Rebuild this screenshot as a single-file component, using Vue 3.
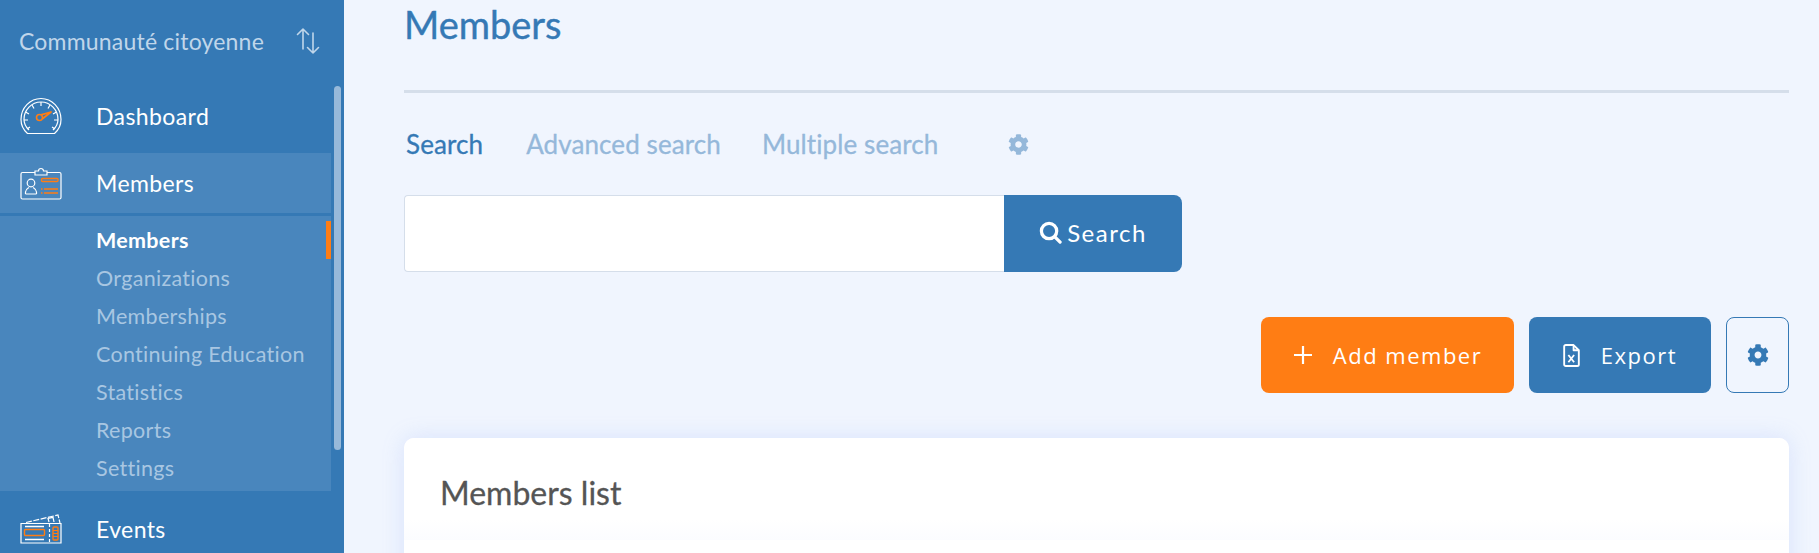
<script setup>
const subItems = [
  { label: 'Members', active: true },
  { label: 'Organizations' },
  { label: 'Memberships' },
  { label: 'Continuing Education' },
  { label: 'Statistics' },
  { label: 'Reports' },
  { label: 'Settings' }
]
const tabs = ['Search', 'Advanced search', 'Multiple search']
const gear = 'M487.4 315.7l-42.6-24.6c4.3-23.2 4.3-47 0-70.2l42.6-24.6c4.9-2.8 7.1-8.6 5.5-14-11.1-35.6-30-67.8-54.7-94.6-3.8-4.1-10-5.1-14.8-2.3L380.8 110c-17.9-15.4-38.5-27.3-60.8-35.1V25.8c0-5.6-3.9-10.5-9.4-11.7-36.7-8.2-74.3-7.8-109.2 0-5.5 1.2-9.4 6.1-9.4 11.7V75c-22.2 7.9-42.8 19.8-60.8 35.1L88.7 85.5c-4.9-2.8-11-1.9-14.8 2.3-24.7 26.7-43.6 58.9-54.7 94.6-1.7 5.4.6 11.2 5.5 14L67.3 221c-4.3 23.2-4.3 47 0 70.2l-42.6 24.6c-4.9 2.8-7.1 8.6-5.5 14 11.1 35.6 30 67.8 54.7 94.6 3.8 4.1 10 5.1 14.8 2.3l42.6-24.6c17.9 15.4 38.5 27.3 60.8 35.1v49.2c0 5.6 3.9 10.5 9.4 11.7 36.7 8.2 74.3 7.8 109.2 0 5.5-1.2 9.4-6.1 9.4-11.7v-49.2c22.2-7.9 42.8-19.8 60.8-35.1l42.6 24.6c4.9 2.8 11 1.9 14.8-2.3 24.7-26.7 43.6-58.9 54.7-94.6 1.5-5.5-.7-11.3-5.6-14.1zM256 336c-44.1 0-80-35.9-80-80s35.9-80 80-80 80 35.9 80 80-35.9 80-80 80z'
</script>

<template>
  <div class="app">
    <aside class="sidebar">
      <div class="community">
        <span>Communauté citoyenne</span>
        <svg class="switch" viewBox="0 0 24 28" width="24" height="28" fill="none" stroke="currentColor" stroke-width="1.6" stroke-linecap="round" stroke-linejoin="round">
          <path d="M7 22V2M1.500 7.500L7 2l5.500 5.500" />
          <path d="M17 6v20M11.500 20.500L17 26l5.500-5.500" />
        </svg>
      </div>

      <div class="navRow first">
        <svg class="navIcon" viewBox="0 0 42 38" width="42" height="38" fill="none" stroke="#fff" stroke-width="1.200">
          <path d="M7.500 36.500C3.500 33 1 28 1 22.500 1 11 10 1.500 21 1.500S41 11 41 22.500C41 28 38.500 33 34.500 36.500Z" />
          <path d="M9 33C5.800 30 4 26.500 4 22.500 4 13 11.600 5 21 5s17 8 17 17.500c0 4-1.800 7.500-5 10.500" />
          <path d="M21 5v4M12 8l2 3.500M30 8l-2 3.500M5.500 15l3.500 2M36.500 15l-3.500 2M4 23h4M38 23h-4M7 32l3-2M35 32l-3-2" />
          <circle cx="19.500" cy="20.500" r="3" stroke="#ff7d14" stroke-width="1.600" />
          <path d="M21 17.800L31 15 22.500 21.800" stroke="#ff7d14" stroke-width="1.800" stroke-linejoin="round" />
        </svg>
        <span>Dashboard</span>
      </div>

      <div class="navRow current">
        <svg class="navIcon" viewBox="0 0 42 34" width="42" height="34" fill="none" stroke="#fff" stroke-width="1.200">
          <path d="M15 6.500H2.500a1.500 1.500 0 0 0-1.500 1.500v23.500a1.500 1.500 0 0 0 1.500 1.500h37a1.500 1.500 0 0 0 1.500-1.500V8a1.500 1.500 0 0 0-1.500-1.500H27" />
          <path d="M15 9V5h3.500a2.500 2.500 0 0 1 5 0H27v4Z" />
          <circle cx="11" cy="17" r="3.800" />
          <path d="M5.500 28v-2c0-2.500 2-3.500 3.500-4.500M16.500 28v-2c0-2.500-2-3.500-3.500-4.500M5.500 28h11" />
          <rect x="21.500" y="12.500" width="16.500" height="3" rx="1" stroke="#ff7d14" stroke-width="1.300" />
          <path d="M24 23h14M24 27h14M21 23h1.500M21 27h1.500" stroke="#ff7d14" stroke-width="1.500" />
        </svg>
        <span>Members</span>
      </div>

      <ul class="subList">
        <li v-for="item in subItems" :key="item.label" class="subItem" :class="{ active: item.active }">{{ item.label }}</li>
      </ul>

      <div class="navRow last">
        <svg class="navIcon" viewBox="0 0 42 30" width="42" height="30" fill="none" stroke="#fff" stroke-width="1.200">
          <path d="M1 9.500h40v19.500H1Z" />
          <path d="M6 8.500L38 1l2 8" stroke-dasharray="6 1.500" />
          <path d="M29 8l-1-3.500 5-1.200 1 4.700" />
          <path d="M5 12.500h19M5 25.500h19" stroke-width="1.400" />
          <path d="M29.500 10v19" stroke-dasharray="3 2" />
          <rect x="4.500" y="15.500" width="20" height="6" rx="1" stroke="#ff7d14" stroke-width="1.400" />
          <rect x="33" y="13" width="5" height="13" rx="1" stroke="#ff7d14" stroke-width="1.400" />
          <path d="M33 16.500h5M33 19.500h5M33 22.500h5" stroke="#ff7d14" />
        </svg>
        <span>Events</span>
      </div>

      <div class="scrollThumb"></div>
    </aside>

    <main class="content">
      <h1>Members</h1>
      <hr class="divider" />

      <nav class="tabs">
        <a v-for="(tab, i) in tabs" :key="tab" class="tab" :class="{ selected: i === 0 }">{{ tab }}</a>
        <svg class="tabGear" viewBox="0 0 512 512" width="21" height="21"><path :d="gear" fill="currentColor" /></svg>
      </nav>

      <div class="searchBar">
        <input class="searchInput" type="text" />
        <button class="searchBtn">
          <svg viewBox="0 0 24 24" width="23" height="23" fill="none" stroke="currentColor" stroke-width="3.400" stroke-linecap="round">
            <circle cx="10.500" cy="10.500" r="8" />
            <path d="M16.500 16.500L22 22" />
          </svg>
          <span>Search</span>
        </button>
      </div>

      <div class="actions">
        <button class="actionBtn add">
          <svg viewBox="0 0 20 20" width="20" height="20" stroke="currentColor" stroke-width="2.200"><path d="M10 1v18M1 10h18" /></svg>
          <span>Add member</span>
        </button>
        <button class="actionBtn export">
          <svg viewBox="0 0 16 22" width="17" height="23" fill="none" stroke="currentColor" stroke-width="1.800" stroke-linejoin="round">
            <path d="M1 2.500a1.500 1.500 0 0 1 1.500-1.500h7.500l5 5v13.500a1.500 1.500 0 0 1-1.500 1.500h-11a1.500 1.500 0 0 1-1.500-1.500Z" />
            <path d="M10 1v5h5" />
            <path d="M5 10.500l5.500 7M10.500 10.500l-5.500 7" stroke-width="1.700" />
          </svg>
          <span>Export</span>
        </button>
        <button class="cogBtn">
          <svg viewBox="0 0 512 512" width="22" height="22"><path :d="gear" fill="currentColor" /></svg>
        </button>
      </div>

      <section class="card">
        <header class="cardHead">Members list</header>
      </section>
    </main>
  </div>
</template>

<style scoped>
.app {
  display: flex;
  height: 553px;
  overflow: hidden;
  background: #f0f5fe;
  font-family: Lato, "Noto Sans", sans-serif;
}

.sidebar {
  position: relative;
  flex: 0 0 344px;
  background: #3579b5;
  color: #fff;
  overflow: hidden;
}

.community {
  height: 86px;
  padding: 0 24px 5px 19px;
  box-sizing: border-box;
  display: flex;
  align-items: center;
  justify-content: space-between;
  color: #c0d6ea;
  font-size: 23px;
  letter-spacing: 0.2px;
}

.navRow {
  height: 60px;
  display: flex;
  align-items: center;
  font-size: 23px;
  letter-spacing: 0.4px;
  width: 331px;
}

.navIcon {
  margin-left: 20px;
  flex: none;
}

.navRow span {
  position: absolute;
  left: 96px;
}

.first {
  margin-bottom: 7px;
}

.current {
  background: #4986bd;
  margin-bottom: 3px;
}

.last {
  margin-top: 8px;
}

.subList {
  list-style: none;
  margin: 0;
  padding: 5px 0 4px;
  width: 331px;
  background: #4986bd;
}

.subItem {
  height: 38px;
  line-height: 38px;
  padding-left: 96px;
  font-size: 21.5px;
  letter-spacing: 0.3px;
  color: #a8c6e2;
}

.subItem.active {
  color: #fff;
  font-weight: 700;
  border-right: 5px solid #ff7d14;
}

.scrollThumb {
  position: absolute;
  left: 334px;
  top: 86px;
  width: 7px;
  height: 364px;
  border-radius: 4px;
  background: #97b9da;
}

.content {
  flex: 1;
  padding: 0 30px 0 60px;
  min-width: 0;
}

h1 {
  margin: 0;
  height: 90px;
  box-sizing: border-box;
  font-size: 38px;
  line-height: 48px;
  font-weight: 400;
  -webkit-text-stroke: 0.4px #3579b5;
  color: #3579b5;
}

.divider {
  margin: 0;
  height: 3px;
  border: none;
  background: #d5deea;
}

.tabs {
  display: flex;
  align-items: center;
  height: 42px;
  margin-top: 30px;
  padding-left: 2px;
  font-size: 26px;
  letter-spacing: 0.1px;
}

.tab {
  margin-right: 41px;
  color: #95b8da;
  -webkit-text-stroke: 0.3px #95b8da;
}

.tab.selected {
  margin-right: 43px;
  color: #3579b5;
  -webkit-text-stroke: 0.3px #3579b5;
}

.tabGear {
  margin-left: 29px;
  color: #95b8da;
}

.searchBar {
  display: flex;
  width: 778px;
  height: 77px;
  margin-top: 30px;
}

.searchInput {
  width: 600px;
  box-sizing: border-box;
  background: #fff;
  border: 1px solid #d5deea;
  border-right: none;
  border-radius: 4px 0 0 4px;
  outline: none;
}

.searchBtn {
  flex: 1;
  display: flex;
  align-items: center;
  justify-content: center;
  gap: 5px;
  padding: 0 0 2px;
  border: none;
  border-radius: 0 8px 8px 0;
  background: #3579b5;
  color: #fff;
  font-family: inherit;
  font-size: 24px;
  letter-spacing: 1.500px;
}

.actions {
  display: flex;
  justify-content: flex-end;
  gap: 15px;
  margin-top: 45px;
}

.actionBtn {
  display: flex;
  align-items: center;
  justify-content: center;
  height: 76px;
  border: none;
  border-radius: 8px;
  color: #fff;
  font-family: "Open Sans", sans-serif;
  font-size: 22px;
  letter-spacing: 1.500px;
}

.add {
  width: 253px;
  gap: 20px;
  background: #ff7d14;
}

.export {
  width: 182px;
  gap: 21px;
  background: #3579b5;
}

.cogBtn {
  width: 63px;
  height: 76px;
  display: flex;
  align-items: center;
  justify-content: center;
  border: 1px solid #3579b5;
  border-radius: 8px;
  background: transparent;
  color: #3579b5;
}

.card {
  margin-top: 45px;
  height: 200px;
  border-radius: 10px 10px 0 0;
  background: #fff;
  box-shadow: 0 0 22px rgba(130, 165, 245, 0.22);
}

.cardHead {
  height: 102px;
  padding: 6px 0 0 36px;
  box-sizing: border-box;
  display: flex;
  align-items: center;
  background: linear-gradient(#fff 80%, #fbfcff);
  border-radius: 10px 10px 0 0;
  font-size: 32px;
  -webkit-text-stroke: 0.3px #555555;
  color: #555555;
}
</style>
